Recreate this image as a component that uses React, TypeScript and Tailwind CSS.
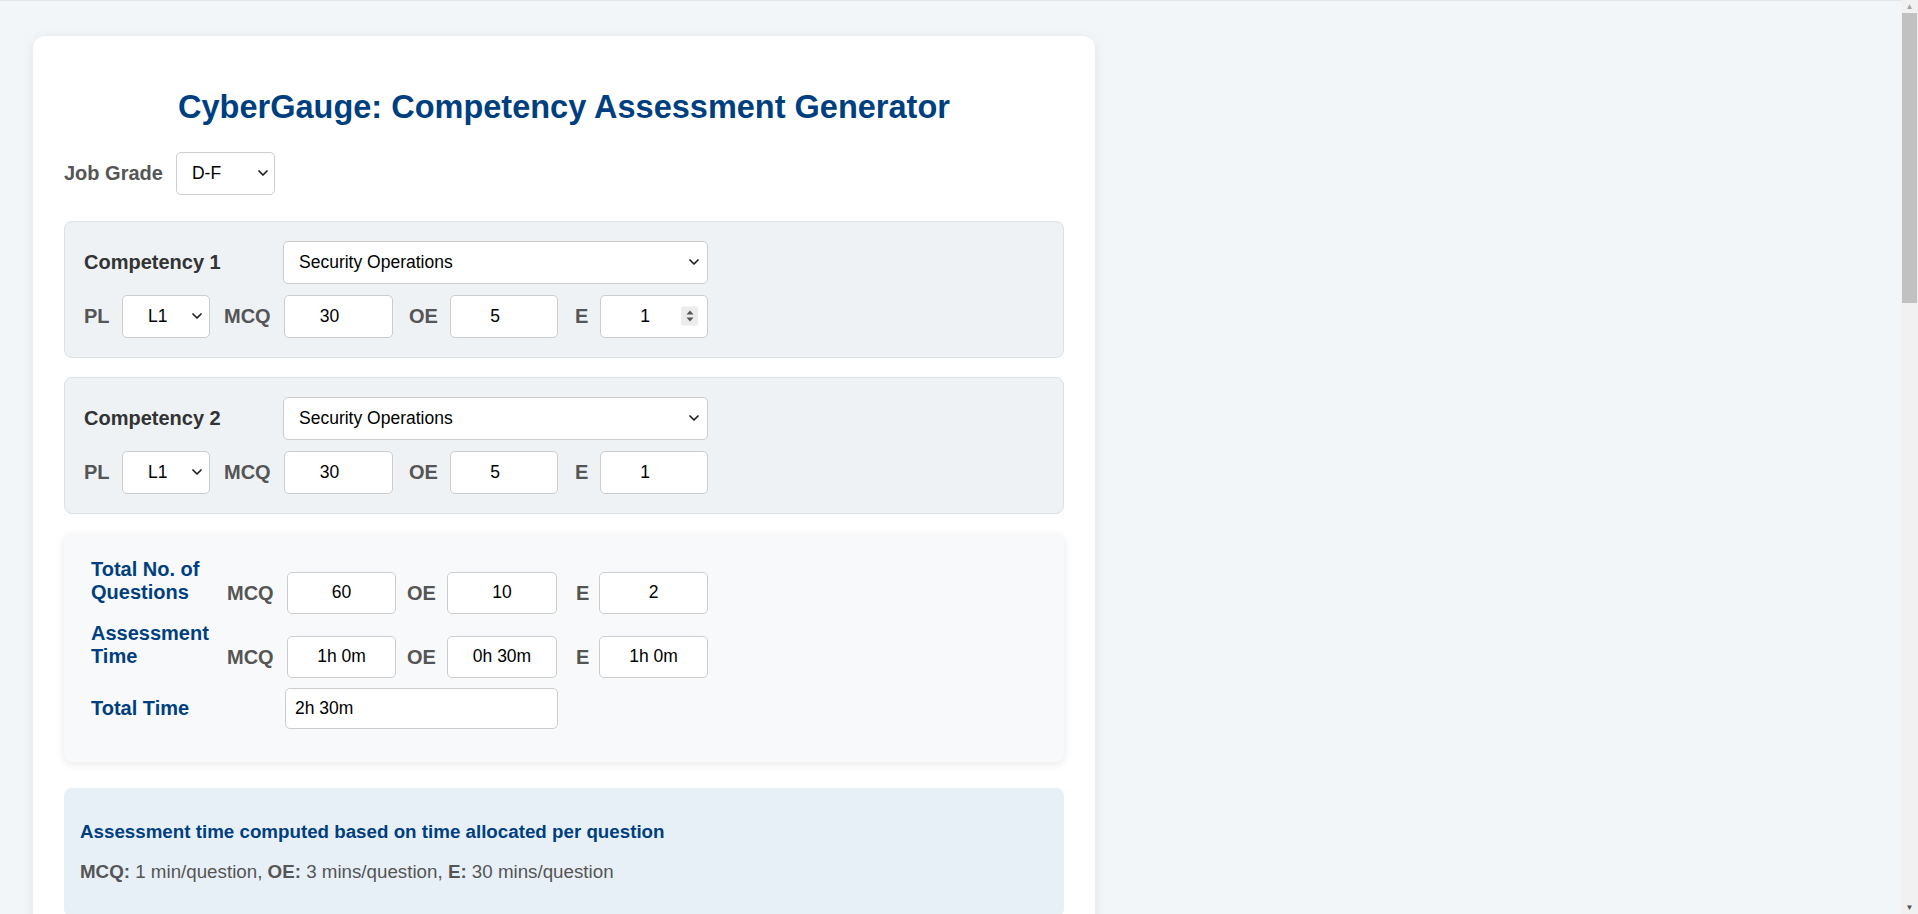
import { useState } from "react"

const blue = "text-[#003f7f]"

function Chevron() {
  return (
    <svg width="10" height="6" viewBox="0 0 10 6" fill="none">
      <path d="M1 1l4 4 4-4" stroke="#1f1f1f" strokeWidth="1.7" strokeLinecap="round" strokeLinejoin="round" />
    </svg>
  )
}

function Dropdown({
  value,
  options,
  className,
  textClass,
  arrowClass,
}: {
  value: string
  options: string[]
  className: string
  textClass: string
  arrowClass: string
}) {
  const [v, setV] = useState(value)
  return (
    <div className={`relative shrink-0 ${className}`}>
      <select
        value={v}
        onChange={(e) => setV(e.target.value)}
        className={`h-full w-full appearance-none rounded-[5px] border border-[#cccccc] bg-white text-[17.5px] font-normal text-black outline-none ${textClass}`}
      >
        {options.map((o) => (
          <option key={o}>{o}</option>
        ))}
      </select>
      <span className={`pointer-events-none absolute top-1/2 -translate-y-1/2 ${arrowClass}`}>
        <Chevron />
      </span>
    </div>
  )
}

function NumBox({ value, w, spinner }: { value: string; w: string; spinner?: boolean }) {
  return (
    <div className={`relative h-[43px] shrink-0 ${w}`}>
      <input
        defaultValue={value}
        className="h-full w-full rounded-[5px] border border-[#cccccc] bg-white pl-[4px] pr-[22px] text-center text-[17.5px] font-normal text-black outline-none"
      />
      {spinner && (
        <span className="pointer-events-none absolute right-[10px] top-1/2 flex h-[19px] w-[17px] -translate-y-1/2 items-center justify-center rounded-[2px] bg-[#ececec]">
          <svg width="8" height="13" viewBox="0 0 8 13">
            <path d="M4 1L7.5 5H0.5z" fill="#555" />
            <path d="M4 12L7.5 8H0.5z" fill="#555" />
          </svg>
        </span>
      )}
    </div>
  )
}

function ReadBox({ value, w }: { value: string; w: string }) {
  return (
    <input
      readOnly
      value={value}
      className={`h-[42px] shrink-0 rounded-[5px] border border-[#cccccc] bg-white text-center text-[17.5px] font-normal text-black outline-none ${w}`}
    />
  )
}

const comps = [
  "Security Operations",
  "Governance, Risk and Compliance",
  "Security Architecture",
  "Incident Response",
]

function CompetencyPanel({ n, spinner }: { n: number; spinner?: boolean }) {
  return (
    <div className="rounded-[8px] border border-[#dae1e7] bg-[#eef2f5] p-[19px]">
      <div className="flex items-center">
        <div className="w-[199px] shrink-0 text-[20px] font-bold text-[#333333]">Competency {n}</div>
        <Dropdown
          value="Security Operations"
          options={comps}
          className="h-[43px] w-[425px]"
          textClass="pl-[15px]"
          arrowClass="right-[9px]"
        />
      </div>
      <div className="mt-[11px] flex items-center text-[20px] font-bold text-[#555555]">
        <div className="w-[38px] shrink-0">PL</div>
        <Dropdown
          value="L1"
          options={["L1", "L2", "L3", "L4"]}
          className="h-[43px] w-[88px]"
          textClass="pl-[25px]"
          arrowClass="right-[8px]"
        />
        <div className="w-[74px] shrink-0 pl-[14px]">MCQ</div>
        <NumBox value="30" w="w-[109px]" />
        <div className="w-[57px] shrink-0 pl-[16px]">OE</div>
        <NumBox value="5" w="w-[108px]" />
        <div className="w-[42px] shrink-0 pl-[17px]">E</div>
        <NumBox value="1" w="w-[108px]" spinner={spinner} />
      </div>
    </div>
  )
}

function SummaryRow({ title, vals }: { title: string; vals: string[] }) {
  return (
    <div className="flex items-end">
      <div className={`w-[136px] shrink-0 pb-[10px] ${blue}`}>
        <div className="w-[122px] text-[20px] font-bold leading-[23px]">{title}</div>
      </div>
      <div className="flex h-[42px] w-[60px] shrink-0 items-center text-[20px] font-bold text-[#555555]">MCQ</div>
      <ReadBox value={vals[0]} w="w-[109px]" />
      <div className="flex h-[42px] w-[51px] shrink-0 items-center pl-[11px] text-[20px] font-bold text-[#555555]">OE</div>
      <ReadBox value={vals[1]} w="w-[110px]" />
      <div className="flex h-[42px] w-[42px] shrink-0 items-center pl-[19px] text-[20px] font-bold text-[#555555]">E</div>
      <ReadBox value={vals[2]} w="w-[109px]" />
    </div>
  )
}

function Scrollbar() {
  return (
    <div className="flex h-full w-[17px] shrink-0 flex-col items-center bg-[#f1f1f1]">
      <div className="flex h-[13px] items-center text-[8px] leading-none text-[#a3a3a3]">▲</div>
      <div className="h-[290px] w-[15px] bg-[#c1c1c1]" />
      <div className="flex-1" />
      <div className="flex h-[13px] items-center text-[8px] leading-none text-[#505050]">▼</div>
    </div>
  )
}

export default function App() {
  const [grade, setGrade] = useState("D-F")

  return (
    <div className="flex h-screen overflow-hidden bg-[#f3f6f9] font-['Liberation_Sans',Arial,sans-serif]">
      <div className="min-w-0 flex-1 overflow-hidden border-t border-[#e1e5e9] pt-[35px]">
        <div className="ml-[33px] w-[1062px] rounded-[12px] bg-white p-[31px] shadow-[0_2px_12px_rgba(0,0,0,0.08)]">
          <h1 className={`mb-[26px] mt-[21.5px] text-center text-[32.5px] font-bold leading-[37px] ${blue}`}>
            CyberGauge: Competency Assessment Generator
          </h1>

          <div className="flex items-center">
            <label className="mr-[13px] text-[20px] font-bold text-[#555555]">Job Grade</label>
            <div className="relative h-[43px] w-[99px]">
              <select
                value={grade}
                onChange={(e) => setGrade(e.target.value)}
                className="h-full w-full appearance-none rounded-[5px] border border-[#cccccc] bg-white pl-[15px] text-[17.5px] text-black outline-none"
              >
                <option>A-C</option>
                <option>D-F</option>
                <option>G-I</option>
              </select>
              <span className="pointer-events-none absolute right-[7px] top-1/2 -translate-y-1/2">
                <Chevron />
              </span>
            </div>
          </div>

          <div className="mt-[26px]">
            <CompetencyPanel n={1} spinner />
          </div>
          <div className="mt-[19px]">
            <CompetencyPanel n={2} />
          </div>

          <div className="mt-[20px] rounded-[8px] bg-[#f8f9fa] px-[27px] pb-[33px] pt-[24px] shadow-[0_2px_10px_rgba(0,0,0,0.09)]">
            <SummaryRow title="Total No. of Questions" vals={["60", "10", "2"]} />
            <div className="mt-[8px]">
              <SummaryRow title="Assessment Time" vals={["1h 0m", "0h 30m", "1h 0m"]} />
            </div>
            <div className="mt-[10px] flex items-center">
              <div className={`w-[194px] shrink-0 text-[20px] font-bold ${blue}`}>Total Time</div>
              <input
                readOnly
                value="2h 30m"
                className="h-[41px] w-[273px] rounded-[5px] border border-[#cccccc] bg-white pl-[9px] text-[17.5px] text-black outline-none"
              />
            </div>
          </div>

          <div className="mt-[26px] rounded-[8px] bg-[#e8f0f7] px-[16px] pb-[34px] pt-[33px]">
            <h3 className={`text-[18.75px] font-bold leading-[22px] ${blue}`}>
              Assessment time computed based on time allocated per question
            </h3>
            <p className="mt-[18px] text-[18.75px] leading-[22px] text-[#555555]">
              <b>MCQ:</b> 1 min/question, <b>OE:</b> 3 mins/question, <b>E:</b> 30 mins/question
            </p>
          </div>
        </div>
      </div>

      <Scrollbar />
    </div>
  )
}
